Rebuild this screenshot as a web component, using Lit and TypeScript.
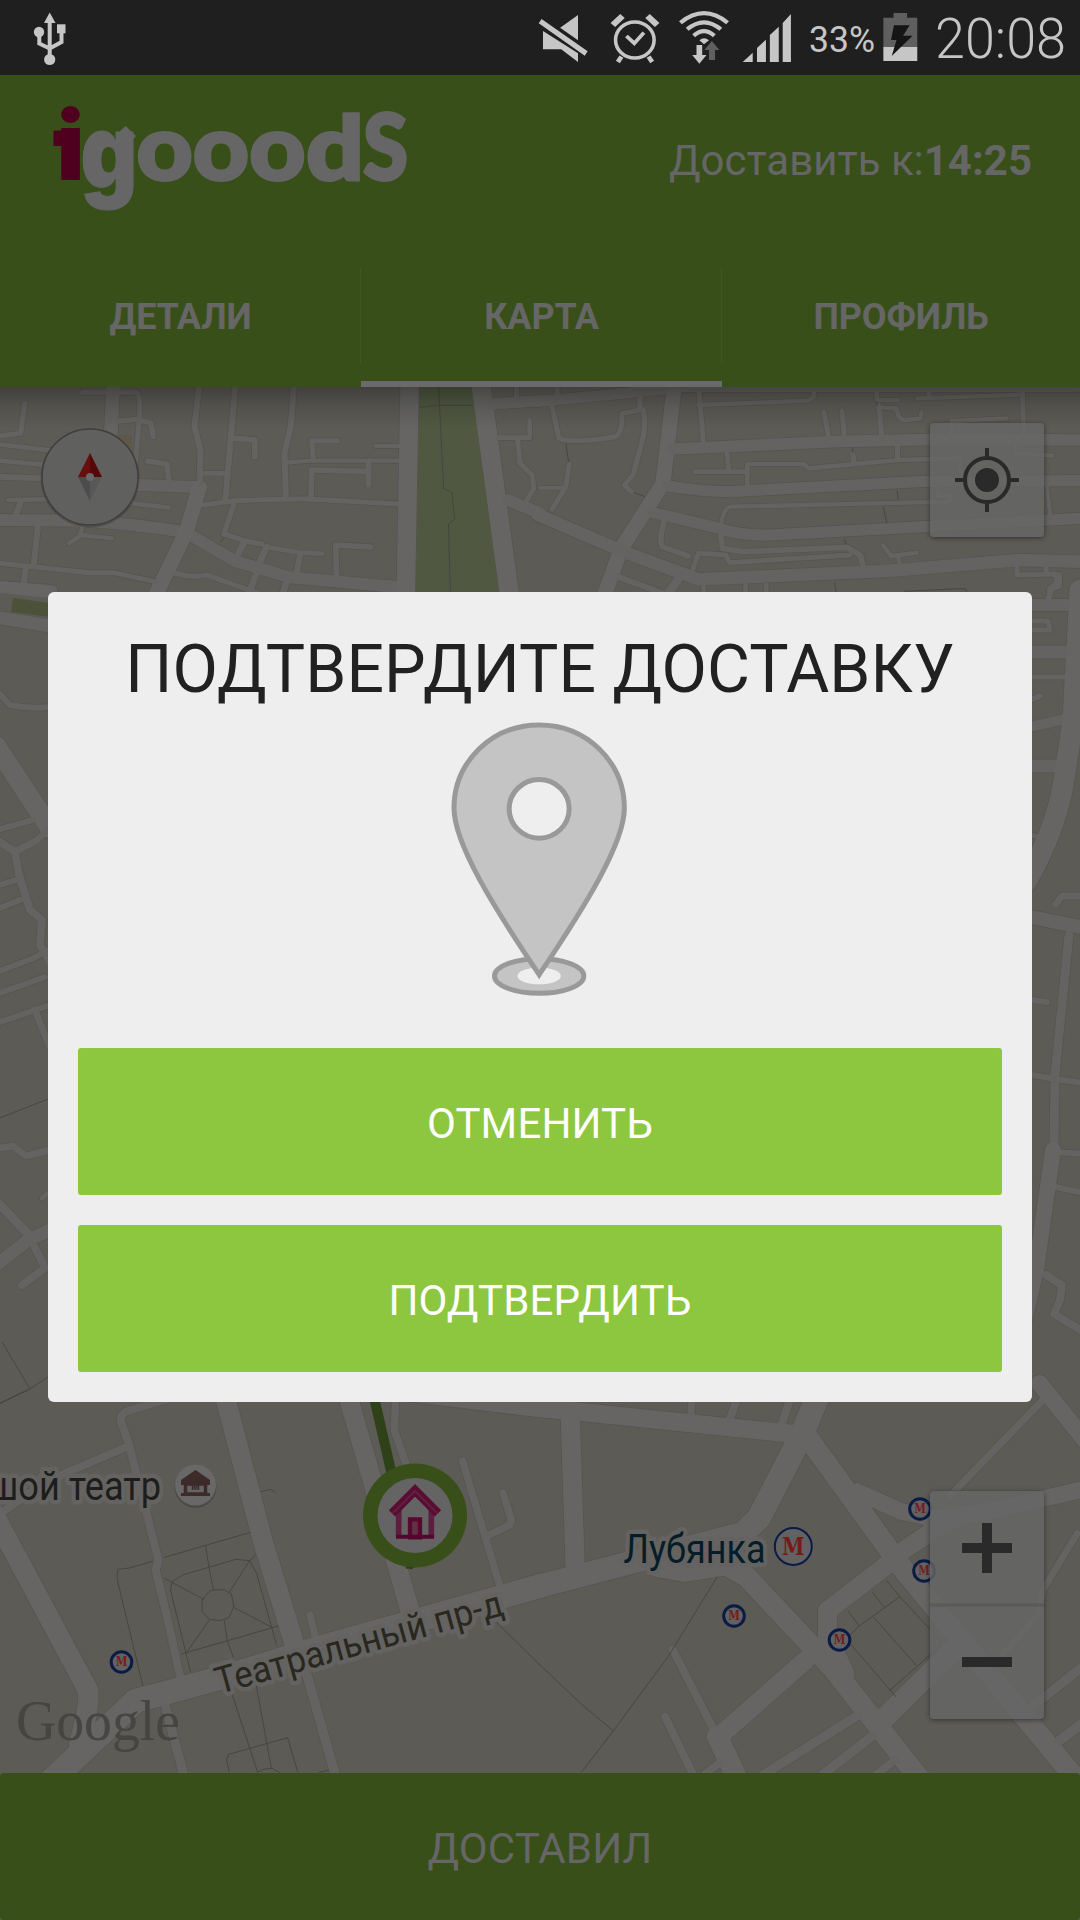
import { LitElement, html, svg, css } from "lit";
import { customElement, property } from "lit/decorators.js";

type Road = [string, number];
interface Tile {
  transform: string;
  scale: number;
  roads: Road[];
  paths: string;
}

const LAND = "#5d5b56";
const ROAD = "#646361";
const EDGE = "#55534f";

const TILES: Tile[] = [
  {
    transform: "translate(0 240) scale(.34439 .33333)",
    scale: 3,
    roads: [
      ["M330 400L315 730", 40], ["M240 457H395Q410 465 405 530L390 715", 15], ["M72 490L60 580L0 587", 15],
      ["M345 543L400 538L438 550L445 590", 16], ["M0 613L150 632Q165 660 150 677L0 662", 14],
      ["M0 710L300 722", 18], ["M305 731L585 742", 36], ["M25 780L260 775L490 803", 14], ["M60 785L45 828", 18],
      ["M0 840L240 842Q400 852 540 877L680 962L840 1012L1160 1042", 36], ["M578 745L541 875L450 1070", 44],
      ["M578 400V440L565 560L582 630L580 730", 18], ["M683 400V440L655 775", 18], ["M853 400V440L845 555L826 640L830 770", 18],
      ["M680 595L740 600V650", 17], ["M585 700H660", 14], ["M428 663L485 672L490 720", 17], ["M980 602H905L910 660", 15],
      ["M1090 618H1160", 12], ["M830 668L900 662H1160", 13], ["M1070 735V665", 17], ["M1070 694L905 690L903 775", 17],
      ["M590 795L680 782L880 776L1160 792", 15], ["M680 790L650 882L720 905L760 912", 16], ["M710 905L690 945", 20],
      ["M770 920L870 938L936 941", 14], ["M775 920L750 975", 20], ["M872 940L862 995", 18], ["M1075 921L975 915L977 1015", 17],
      ["M510 1000Q560 1015 600 1005L750 1060", 16], ["M745 1000L730 1040", 20], ["M835 1015L820 1065", 20],
      ["M110 860L98 975", 18], ["M0 970L260 998H330L450 1025", 15], ["M75 985L68 1035", 18], ["M0 1040L150 1052", 34],
      ["M240 860L230 890L200 910", 13], ["M235 885L325 895", 13],
      ["M1190 400L1178 1070", 54], ["M1392 400L1480 1070", 56], ["M1430 492L1568 482", 34], ["M1500 400V480", 15],
      ["M1445 593H1538V540", 14], ["M1503 600L1510 670L1545 705L1550 745L1530 780", 15], ["M1475 780L1568 820", 36],
    ],
    paths: "M1273 440L1276 490L1288 745L1312 757L1320 838L1302 852L1308 1060M1217 502L1273 496H1374M638 908L650 895",
  },
  {
    transform: "translate(540 240) scale(.34439 .33333)",
    scale: 3,
    roads: [
      ["M-10 485L240 460L420 440H1560", 32], ["M50 400V465", 15], ["M35 500L55 595Q90 612 220 590Q240 575 238 520L300 508Q310 560 295 610L270 705L245 735L265 755", 15],
      ["M290 470V505", 15], ["M388 455L357 730L236 925L185 1070", 44], ["M-5 825L240 934L460 1018L1020 992L1390 960L1568 965", 38],
      ["M85 672L75 740L35 808", 15], ["M0 743H75", 12], ["M385 627L850 605L1150 598L1568 600", 35], ["M462 455L474 605", 15],
      ["M460 495L780 482L795 470V440", 13], ["M824 515L838 590", 15], ["M877 512L884 590", 15], ["M978 440V480H1040", 14],
      ["M984 495L992 585", 15], ["M980 502L1035 505Q1040 540 1060 540L1105 535L1108 515", 13], ["M1095 475L1400 464", 13], ["M1130 440V475", 14],
      ["M1400 440L1405 590", 15], ["M1195 590V543L1355 535", 13], ["M543 640L548 690", 14], ["M450 695H602V735M602 695V672H765L780 685L1040 660L1220 655V700", 14],
      ["M908 640L912 665", 15], ["M1038 615V655", 15], ["M370 738Q520 762 600 752L1100 725L1568 722", 34],
      ["M525 855Q535 800 555 800L1190 785V765L1155 770V740", 13], ["M330 818L520 865Q600 892 700 883L1568 835", 34], ["M360 845Q345 900 355 920L430 948", 17],
      ["M440 1000L460 940L540 945L550 968L900 945", 15], ["M525 885L530 925L590 935L890 922L930 945L940 985", 17],
      ["M995 915L1020 948L1095 938M1040 950L1045 980", 13], ["M225 1010L370 1065", 18], ["M400 1020L370 1065", 26], ["M475 1040V1060M597 1036V1060M657 1035V1060", 14],
      ["M1385 985V1005L1495 1002Q1510 1030 1480 1045V1060M1470 980V1000", 15], ["M1472 740L1482 830", 12], ["M1378 600L1382 640L1488 647", 13],
    ],
    paths: "M75 610L83 665M275 758L305 770M908 625V640M1037 752L1040 778M997 800L1007 850M884 897L888 912M855 1028L860 1056M1058 1054L1220 1046H1235L1240 1056M979 485V497",
  },
  {
    transform: "",
    scale: 1,
    roads: [
      ["M0 618L50 626", 13], ["M0 694L10 705Q30 709 50 707", 6], ["M-4 746L50 828", 20], ["M0 829L33 820", 6], ["M14 852L36 841L50 828", 7],
      ["M0 842L15 852L19 875L30 910L42 920L40 945L50 962", 8], ["M0 885L16 880M0 908L20 900M0 971L34 958L48 950M0 993L45 977M0 1022L50 1005", 6], ["M35 1010L50 1048", 7],
      ["M0 1148L13 1146L26 1156L50 1150", 7], ["M-2 1203L30 1236", 9], ["M-2 1264L28 1240L50 1230", 13], ["M22 1285L45 1268L34 1246", 8], ["M42 1198L52 1190", 5],
      ["M1030 605H1075", 12], ["M1048 600L1052 588L1059 586V575", 6], ["M1032 621H1048L1050 630H1032", 5], ["M1030 652H1073M1030 766H1066", 13], ["M1030 677H1064", 5], ["M1030 700L1040 696", 6], ["M1030 727L1070 718", 10],
      ["M1032 835L1048 841", 5], ["M1080 590L1073 720L1064 780Q1056 830 1026 882", 21], ["M1026 916L1080 927", 14], ["M1056 904L1062 896H1084", 7],
      ["M1069 935L1055 1075L1054 1145", 9], ["M1032 1000L1047 1002M1032 1075L1055 1079L1084 1083M1056 1152L1084 1154M1056 1187L1084 1193", 6],
      ["M1053 1150L1036 1270L1024 1320", 16], ["M1046 1275L1062 1285L1060 1300L1054 1314L1084 1332", 8],
    ],
    paths: "M0 1118L48 1099M2 1342L30 1389L48 1377M0 1403L30 1389",
  },
  {
    transform: "translate(0 1390) scale(.34439 .33333)",
    scale: 3,
    roads: [
      ["M-10 378L130 280L200 245L370 170", 24], ["M-40 330L255 900Q262 950 230 1060", 60], ["M490 26L365 65Q340 80 360 120L375 165L460 510L452 540L485 680L525 870", 24],
      ["M648 0L765 460L860 780", 58], ["M890 850L975 1160", 28], ["M1005 0L1190 660", 56], ["M1150 0L1145 120L1185 240", 22],
      ["M900 675L915 740", 22], ["M1343 212L1410 445L1455 600", 22], ["M1460 308L1485 390L1480 405L1410 440", 22], ["M478 940L535 1160", 27],
      ["M120 1200L395 932Q700 850 870 790L1568 588", 72],
    ],
    paths:
      "M80 0L0 40M757 305L785 298L800 307M475 503L727 427M597 467L607 533L620 600M443 514L375 534L343 538Q337 560 343 580L415 888M500 575L530 555L685 508L725 512L745 550L803 765M500 575L495 600L553 845M477 565L592 628M743 495L725 512L665 608M610 601L650 599L672 612L679 650L665 683L640 692L608 688L587 665V630ZM680 653L790 712M808 708L527 792M608 690L540 790M651 691L660 752L678 803M670 900L748 1147L768 1137L790 1135L812 1148M743 880L788 1135M666 1147L658 1110L664 1093L835 1043L865 1147M1440 695L1568 825M925 1148L955 1140",
  },
  {
    transform: "translate(540 1390) scale(.34439 .33333)",
    scale: 3,
    roads: [
      ["M88 80L102 530", 56], ["M443 0L438 80", 22], ["M575 20L550 90", 24], ["M725 30L700 110", 24], ["M-480 -5L0 55L100 64L740 132", 54],
      ["M810 10L760 135L635 385L590 430L0 588", 70], ["M340 530L420 545L540 525L600 560L850 835L1120 1190", 62],
      ["M765 125L1060 545L1590 1210", 62], ["M920 305L1050 365L1130 382L1230 380L1590 295", 50], ["M1050 485L1150 415L1230 375", 54],
      ["M1460 30L1190 318", 22], ["M1450 -20L1590 160", 50], ["M1020 515L835 662V740L885 850", 56], ["M770 812L530 1030", 56],
      ["M385 778L515 1040", 24], ["M515 1040L575 1170", 62], ["M363 980L450 1165", 24], ["M1215 765L1000 985", 62], ["M920 978L640 1160", 28],
      ["M965 1038L820 1155", 28], ["M1030 1110L975 1155", 24], ["M1560 430L1460 600L1450 670L1330 810", 20], ["M1575 830L1430 950", 28], ["M1575 1000L1510 1050", 30],
      ["M520 1120L480 1150", 24],
    ],
    paths:
      "M515 560L375 795L213 1023L120 1147M0 825L120 942L213 1023M895 663L927 708L1045 620L1007 572M965 607L1002 655M970 683L1092 825M900 760L1033 920M1015 902L1160 770L1163 755L1130 715L1045 620M927 708L900 735",
  },
];

const METROS: [number, number][] = [[121.5, 1662], [734, 1616], [839.5, 1640], [920, 1509], [924, 1571]];

@customElement("status-bar")
class StatusBar extends LitElement {
  static styles = css`
    :host { display: flex; height: 75px; background: #1f1f1f; align-items: stretch; justify-content: space-between; }
    svg { display: block; height: 75px; fill: #c6c6c6; overflow: visible; }
    .right { display: flex; padding-right: 14px; }
    .left { padding-left: 33px; }
    text { font-family: Roboto, sans-serif; }
    .mute { width: 50px; margin-right: 22px; }
    .alarm { width: 50px; margin-right: 19px; }
    .wifi { width: 50px; margin-right: 13px; }
    .signal { width: 50px; margin-right: 16px; }
    .pct { width: 68px; margin-right: 7.5px; }
    .battery { width: 35px; margin-right: 16px; }
    .clock { width: 132px; }
  `;
  render() {
    return html`
      <div class="left">
        <svg width="34" viewBox="33 0 34 75">
          <g fill="none" stroke="#c6c6c6" stroke-width="4"><path d="M49.7 18V58M39.3 32V43.5L49.7 48.5L61.5 42V30" /></g>
          <path d="M49.7 12.5L55.5 23H44Z" /><circle cx="39" cy="32" r="5.2" /><rect x="57" y="24.3" width="8.5" height="9" /><circle cx="49.7" cy="59.5" r="5.6" />
        </svg>
      </div>
      <div class="right">
        <svg class="mute" viewBox="50 0 140 225" preserveAspectRatio="none">
          <path d="M162 45V121L112 83ZM64 93L162 160V186L115 148H64Z" /><path d="M60 57L189 154L181 167L52 70Z" />
        </svg>
        <svg class="alarm" viewBox="252 0 140 225" preserveAspectRatio="none">
          <g fill="none" stroke="#c6c6c6">
            <circle cx="321.500" cy="120" r="54" stroke-width="10" />
            <path d="M298 108L320 130L347 98" stroke-width="11" />
            <path d="M260 75L287 48M384 75L357 48" stroke-width="18" />
            <path d="M284 170L274 186M360 170L370 186" stroke-width="13" />
          </g>
        </svg>
        <svg class="wifi" viewBox="445 0 140 225" preserveAspectRatio="none">
          <g fill="none" stroke="#c6c6c6" stroke-width="12">
            <path d="M449 68Q515 11 581 68" /><path d="M468 88Q515 46 562 88" /><path d="M486 107Q515 80 544 107" />
          </g>
          <path d="M502 121Q515 108 529 121L515 133ZM494 135H510V165H522L502 191L482 165H494Z" />
          <path d="M529 180V150H516L537 123L558 150H546V180Z" fill="#5f5f5f" />
        </svg>
        <svg class="signal" viewBox="622 0 140 225" preserveAspectRatio="none">
          <path d="M624 186L652 158V186ZM664 186V144L689 119V186ZM700 186V105L725 80V186ZM736 186V69L759 42V186Z" />
        </svg>
        <svg class="pct" viewBox="808 0 68 75"><text x="809" y="52" font-size="36" textLength="66" lengthAdjust="spacingAndGlyphs">33%</text></svg>
        <svg class="battery" viewBox="1018 0 96 225" preserveAspectRatio="none">
          <path d="M1019 53H1047V39H1084V53H1112V141H1019Z" fill="#5f5f5f" /><path d="M1019 141H1112V183H1019Z" />
          <path d="M1048 76H1091L1073 107H1099L1042 168L1055 120H1040Z" fill="#151515" />
        </svg>
        <svg class="clock" viewBox="934 0 132 75"><text x="935" y="57.800" font-size="55" font-weight="300" textLength="131" lengthAdjust="spacingAndGlyphs">20:08</text></svg>
      </div>
    `;
  }
}

@customElement("brand-logo")
class BrandLogo extends LitElement {
  static styles = css`
    :host { display: block; }
    svg { display: block; overflow: visible; }
    .word { font-family: Lato, sans-serif; font-weight: 900; fill: #666; stroke: #666; stroke-width: 3; }
    .tail { font-family: Inter, sans-serif; stroke-width: 1; }
    .i { font-family: Inter, sans-serif; font-weight: 900; fill: #50001f; }
  `;
  render() {
    return html`
      <svg width="360" height="112" viewBox="50 102 360 112">
        <defs><clipPath id="stem"><rect x="300" y="112.500" width="66" height="80" /></clipPath></defs>
        <rect x="53.500" y="130.500" width="16" height="15.500" fill="#50001f" />
        <text class="i" font-size="95" transform="translate(56.500 179.500)">i</text>
        <text class="word tail" font-size="103" transform="translate(80.500 188)" textLength="57" lengthAdjust="spacingAndGlyphs">g</text>
        <path d="M118 133L125.500 126L136 136L129 144Z" fill="#666" />
        <text class="word" font-size="91" transform="translate(136.500 180)" textLength="169" lengthAdjust="spacingAndGlyphs">ooo</text>
        <g clip-path="url(#stem)"><text class="word" font-size="91" transform="translate(306 180)" textLength="58" lengthAdjust="spacingAndGlyphs">d</text></g>
        <text class="word" font-size="92" transform="translate(363 180)" textLength="45" lengthAdjust="spacingAndGlyphs">S</text>
      </svg>
    `;
  }
}

@customElement("app-header")
class AppHeader extends LitElement {
  @property({ type: Array }) tabs = ["ДЕТАЛИ", "КАРТА", "ПРОФИЛЬ"];
  @property({ type: Number }) active = 1;
  static styles = css`
    :host { display: block; height: 312px; background: #384f1a; color: #666; }
    .bar { display: flex; height: 168px; justify-content: space-between; padding: 0 48px 0 50px; }
    brand-logo { padding-top: 27px; }
    .due { font-size: 42px; line-height: 50px; padding-top: 61px; white-space: nowrap; }
    .tabs { display: grid; grid-template-columns: 361px 361px 358px; height: 144px; }
    .tab { box-sizing: border-box; display: flex; align-items: center; justify-content: center; font-size: 36px; font-weight: 700; letter-spacing: -0.15px; border-bottom: 6px solid transparent; padding-top: 10px;
      background: linear-gradient(#405724, #405724) right 24px / 1px 96px no-repeat; }
    .tab:last-child { background: none; }
    .active { border-bottom-color: #6a6a6a; }
  `;
  render() {
    return html`
      <div class="bar"><brand-logo></brand-logo><div class="due">Доставить к:<b>14:25</b></div></div>
      <div class="tabs">${this.tabs.map((t, i) => html`<div class="tab ${i === this.active ? "active" : ""}">${t}</div>`)}</div>
    `;
  }
}

@customElement("city-map")
class CityMap extends LitElement {
  static styles = css`
    :host { display: block; position: relative; height: 1386px; overflow: hidden; background: #5d5b56; }
    .canvas { display: block; }
    .road { fill: none; stroke-linecap: round; stroke-linejoin: round; }
    .label { font-family: Roboto, sans-serif; paint-order: stroke; stroke: #646361; stroke-width: 9px; stroke-linejoin: round; }
    .m { font-family: "DejaVu Serif", serif; font-weight: 700; fill: #751c1a; text-anchor: middle; }
    .google { font-family: "Liberation Serif", serif; fill: #464541; }
    .shade { position: absolute; left: 0; right: 0; top: 0; height: 42px; background: linear-gradient(rgba(0, 0, 0, 0.3), rgba(0, 0, 0, 0.12) 45%, transparent); }
    .control { position: absolute; left: 930px; width: 114px; border-radius: 4px; background: rgba(103, 103, 102, 0.8); box-shadow: 0 1px 5px rgba(0, 0, 0, 0.45); }
    .control svg { display: block; }
    .locate { top: 36px; height: 114px; }
    .zoom { top: 1104px; height: 228px; }
    .compass { position: absolute; left: 36px; top: 36px; }
  `;
  private metro(x: number, y: number, r: number, sw: number, fs: number) {
    return svg`<circle cx=${x} cy=${y} r=${r} fill="#626262" stroke="#0a1b46" stroke-width=${sw}></circle>
      <text class="m" x=${x} y=${y + fs * 0.32} font-size=${fs} textLength=${fs * 0.9} lengthAdjust="spacingAndGlyphs">M</text>`;
  }
  render() {
    return html`
      <svg class="canvas" width="1080" height="1386" viewBox="0 387 1080 1386">
        <rect x="0" y="387" width="1080" height="1386" fill=${LAND} />
        <path d="M13 598L50 603V617L11 612Z" fill="#4b5239" />
        <path d="M117 435H132V446L129 477H115Z" fill="#5f5848" />
        ${TILES.map(
          (t) => svg`<g transform=${t.transform}>
            ${t.roads.map(([d, w]) => svg`<path class="road" d=${d} stroke=${EDGE} stroke-width=${w + t.scale * 1.3}></path>`)}
          </g>`,
        )}
        ${TILES.map(
          (t) => svg`<g transform=${t.transform}>
            ${t.roads.map(([d, w]) => svg`<path class="road" d=${d} stroke=${w / t.scale > 14 ? "#666564" : ROAD} stroke-width=${w}></path>`)}
          </g>`,
        )}
        <path d="M419 387H471.500L499.500 595H416Z" fill="#505841" />
        <path d="M0 587L50 592" stroke="#666564" stroke-width="12" />
        ${TILES.map((t) => svg`<g transform=${t.transform}><path d=${t.paths} fill="none" stroke="#454440" stroke-width=${t.scale * 0.9}></path></g>`)}
        <path d="M370 1380L392 1475L411 1568" fill="none" stroke="#2e4118" stroke-width="10" />
        <text class="label" x="-11" y="1500" font-size="40" fill="#1d1d1c" textLength="172" lengthAdjust="spacingAndGlyphs">шой театр</text>
        <text class="label" x="623.500" y="1563" font-size="40" fill="#041d26" textLength="142" lengthAdjust="spacingAndGlyphs">Лубянка</text>
        <text class="label" font-size="37" fill="#29281e" transform="translate(219 1694) rotate(-15.500)" textLength="297" lengthAdjust="spacingAndGlyphs">Театральный пр-д</text>
        <circle cx="195.500" cy="1487" r="21" fill="#4c4b48" />
        <circle cx="195.500" cy="1485" r="20.500" fill="#686868" />
        <path d="M181 1480L195.500 1470L210 1480V1485H181Z" fill="#3c2b28" />
        <path d="M185.500 1484H205.500V1494H185.500Z" fill="#656565" stroke="#3c2b28" stroke-width="3.500" /><path d="M181 1493H210V1496H181Z" fill="#3c2b28" />
        <text x="195.500" y="1490" font-size="9.500" font-weight="900" font-family="Roboto, sans-serif" text-anchor="middle" fill="#3c2b28">M</text>
        <path d="M411 1550V1569" stroke="#26380f" stroke-width="3" />
        <circle cx="415" cy="1515.500" r="52" fill="#384f1a" /><circle cx="415" cy="1515.500" r="37.500" fill="#646464" />
        <g transform="translate(350 1450) scale(.33333)">
          <path d="M146 180V262M244 180V262" fill="none" stroke="#5c1f40" stroke-width="17" />
          <path d="M180 262V208H210V262Z" fill="#603244" stroke="#560a30" stroke-width="13" />
          <path d="M138 260H252" stroke="#54062e" stroke-width="12" />
          <path d="M126 190L195 121L264 190" fill="none" stroke="#5a0c33" stroke-width="27" />
          <path d="M128 190L195 123L262 190" fill="none" stroke="#5c2340" stroke-width="6" />
        </g>
        ${METROS.map(([x, y]) => this.metro(x, y, 10.3, 3, 13))}
        ${this.metro(793.3, 1546.5, 18.5, 2, 25)}
        <text class="google" x="16" y="1739.500" font-size="56" textLength="164" lengthAdjust="spacingAndGlyphs">Google</text>
      </svg>
      <div class="shade"></div>
      <svg class="compass" width="108" height="108" viewBox="36 423 108 108">
        <ellipse cx="90" cy="478" rx="49.500" ry="49.500" fill="rgba(0,0,0,.18)" />
        <circle cx="90" cy="477" r="48" fill="#60605e" stroke="#3f3f3e" stroke-width="1.500" />
        <path d="M90 453V477H78Z" fill="#650f0e" /><path d="M90 453V477H102Z" fill="#550807" />
        <path d="M78 477H90V501Z" fill="#4c4c4c" /><path d="M102 477H90V501Z" fill="#585858" /><circle cx="90" cy="477" r="4" fill="#686868" />
      </svg>
      <div class="control locate">
        <svg width="114" height="114" fill="none" stroke="#2a2a2a" stroke-width="4">
          <circle cx="57" cy="57" r="22" /><circle cx="57" cy="57" r="12" fill="#2a2a2a" stroke="none" /><path d="M57 25V34M57 80V89M25 57H34M80 57H89" />
        </svg>
      </div>
      <div class="control zoom">
        <svg width="114" height="228" stroke="#2a2a2a" stroke-width="10"><path d="M32 57H82M57 32V82M32 171H82" /><path d="M0 114H114" stroke="#5b5b59" stroke-width="3.500" /></svg>
      </div>
    `;
  }
}

@customElement("confirm-dialog")
class ConfirmDialog extends LitElement {
  static styles = css`
    :host { box-sizing: border-box; display: flex; flex-direction: column; width: 984px; height: 810px; padding: 30px; border-radius: 6px; background: #eee; align-items: center; }
    .title { font-size: 66px; line-height: 78px; color: #212121; white-space: nowrap; font-weight: 400; letter-spacing: 0.12px; margin: 9px 0 0; }
    .pin { display: block; height: 310px; margin-top: -9px; margin-bottom: auto; }
    .btn { box-sizing: border-box; display: flex; flex: none; align-items: center; justify-content: center; width: 924px; height: 147px; padding-top: 4px; border-radius: 3px; background: #8dc63f; color: #fff; font-size: 42px; letter-spacing: 0.15px; }
    .btn + .btn { margin-top: 30px; }
  `;
  render() {
    return html`
      <h1 class="title">ПОДТВЕРДИТЕ ДОСТАВКУ</h1>
      <svg class="pin" width="220" height="310" viewBox="0 0 660 930" fill="#c4c4c4" stroke="#999" stroke-width="15">
        <ellipse cx="327.500" cy="828" rx="134" ry="52" /><ellipse cx="327.500" cy="828" rx="65" ry="25" fill="#eee" stroke="none" />
        <path d="M327.500 75C185 75 72 186 72 325C72 430 190 620 327.500 824C465 620 583 430 583 325C583 186 470 75 327.500 75Z" />
        <ellipse cx="327.500" cy="326.500" rx="90" ry="88" fill="#eee" />
      </svg>
      <div class="btn">ОТМЕНИТЬ</div>
      <div class="btn">ПОДТВЕРДИТЬ</div>
    `;
  }
}

@customElement("app-root")
class AppRoot extends LitElement {
  static styles = css`
    :host { display: flex; flex-direction: column; position: relative; width: 1080px; height: 1920px; overflow: hidden; background: #5d5b56; font-family: Roboto, sans-serif; }
    confirm-dialog { position: absolute; left: 48px; top: 592px; }
    .done { box-sizing: border-box; display: flex; height: 147px; align-items: center; justify-content: center; border-radius: 4px; background: #384f1a; color: #666; font-size: 42px; letter-spacing: 0.15px; padding-top: 4px; }
  `;
  render() {
    return html`
      <status-bar></status-bar>
      <app-header></app-header>
      <city-map></city-map>
      <div class="done">ДОСТАВИЛ</div>
      <confirm-dialog></confirm-dialog>
    `;
  }
}
